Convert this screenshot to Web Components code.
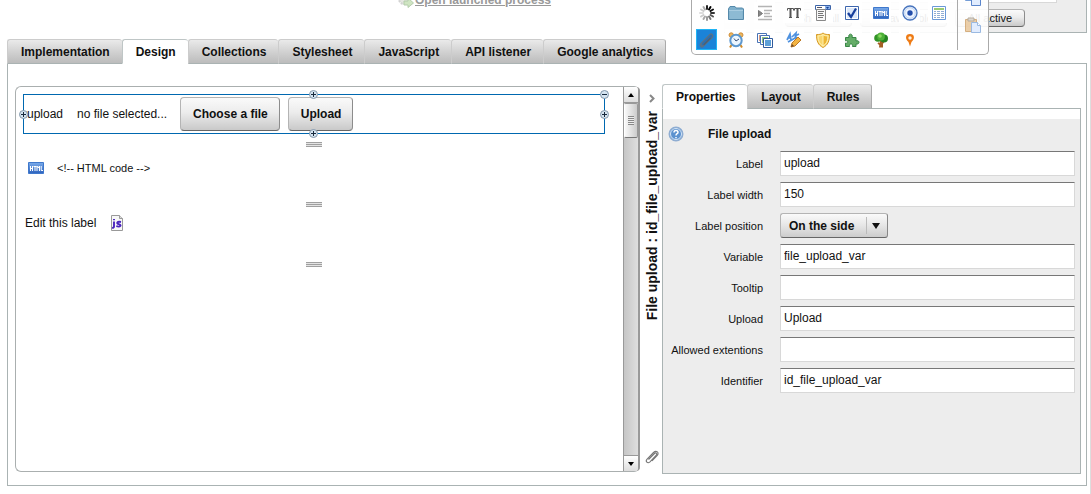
<!DOCTYPE html>
<html lang="en">
<head>
<meta charset="utf-8">
<title>Form designer</title>
<style>
  body { margin: 0; min-height: 100vh; background: #fff; color: #111; font: 12px/16px "Liberation Sans", Arial, sans-serif; }
</style>
</head>
<body>
<form-designer></form-designer>

<script>
const ICONS = {
  spinner: `<g stroke-width="2" stroke-linecap="round"><path d="M8 1v3" stroke="#222"/><path d="M11.5 2l-1.5 2.500" stroke="#000"/><path d="M14 4.500L11.500 6" stroke="#111"/><path d="M15 8h-3" stroke="#333"/><path d="M14 11.500L11.500 10" stroke="#555"/><path d="M11.500 14L10 11.500" stroke="#777"/><path d="M8 15v-3" stroke="#999"/><path d="M4.500 14L6 11.500" stroke="#aaa"/><path d="M2 11.500L4.500 10" stroke="#ccc"/><path d="M1 8h3" stroke="#ddd"/><path d="M2 4.500L4.500 6" stroke="#ccc"/><path d="M4.500 2L6 4.500" stroke="#aaa"/></g>`,
  folder: `<path d="M.5 4V14.500h15V4l-1-1H8L7 1.500H2L1 3z" fill="#7fb0cc" stroke="#5589aa"/><path d="M1 5.500h14" stroke="#a8cce0"/><path d="M1.500 6h13v8h-13z" fill="#8dbad3"/>`,
  indent: `<path d="M1 1.500h14M7 5.500h8M7 8.500h6M7 11.500h8M1 14.500h14" stroke="#b4b4b4" stroke-width="1.500"/><path d="M1.500 5.500l4 3-4 3z" fill="#888" stroke="#777"/>`,
  textsize: `<path d="M1.500 5.500V3.500h6v2M8.500 5.500V3.500h6v2" fill="none" stroke="#555"/><path d="M4.500 3.500v9M11.500 3.500v9" stroke="#555" stroke-width="2"/><path d="M3 12.500h3M10 12.500h3" stroke="#555"/>`,
  dropdown: `<path d="M.5.5h15v4H.5z" fill="#fff" stroke="#3c64a8"/><path d="M10 1h5v3h-5z" fill="#87aee8"/><path d="M11 2h3l-1.500 2z" fill="#143f91"/><path d="M2 2.500h5" stroke="#556"/><path d="M1.500 4.500h9v11h-9z" fill="#f8f8f8" stroke="#888"/><path d="M3 6.500h6M3 8.500h5M3 10.500h6M3 12.500h5" stroke="#777"/>`,
  checkbox: `<path d="M1.500 1.500h13v13h-13z" fill="#dbe7f8" stroke="#3d66ad"/><path d="M2.500 2.500h11v11h-11z" fill="none" stroke="#fff"/><path d="M4 8l3 4 5-8.500" fill="none" stroke="#173f9c" stroke-width="2.300"/>`,
  html: `<defs><linearGradient id="h" x2="0" y2="1"><stop stop-color="#7aabea"/><stop offset="1" stop-color="#2c62bd"/></linearGradient></defs><path d="M.5 2.500h15v11H.5z" fill="url(#h)" stroke="#3f78cc"/><path d="M2.500 6v5M4.500 6v5M2.500 8.500h2M5.500 6.500h3M7 6.500V11M9 11V6l1.200 2L11.500 6v5M13.200 6v4.500H15" fill="none" stroke="#fff"/>`,
  radio: `<circle cx="8" cy="8" r="7" fill="#edf4ff" stroke="#4874bd" stroke-width="1.300"/><circle cx="8" cy="8" r="5.300" fill="none" stroke="#c1d4ef"/><circle cx="8" cy="8" r="2.700" fill="#244eaa"/>`,
  table: `<path d="M1.500 1.500h13v13h-13z" fill="#fff" stroke="#6a99d8"/><path d="M3 4h10" stroke="#9bca73" stroke-width="2"/><path d="M3 6.500h2M3 8.500h2M3 10.500h2M3 12.500h2M6 6.500h3M6 8.500h3M6 10.500h3M6 12.500h3M10 6.500h3M10 8.500h3M10 10.500h3M10 12.500h3" stroke="#91aed5"/>`,
  paperclip: `<path d="M3 13l9-9" stroke="#5a7288" stroke-width="5" stroke-linecap="round"/><path d="M4 12l8-8" stroke="#2e6fae" stroke-width="2.500" stroke-linecap="round"/><path d="M5 12.500l6-6" fill="none" stroke="#50606f" stroke-width="1.200" stroke-linecap="round"/>`,
  clip: `<path d="M4.500 10.500l6-6c1.500-1.500 3 .2 1.800 1.500L6 12.800c-2.500 2.200-5-.4-2.900-2.700L9.500 3.500c3-2.800 6 .3 3.800 2.800L8 12" fill="none" stroke="#777" stroke-width="1.100"/>`,
  clock: `<circle cx="3.200" cy="3" r="2.200" fill="#edb65c" stroke="#cf8d38"/><circle cx="12.800" cy="3" r="2.200" fill="#edb65c" stroke="#cf8d38"/><path d="M3.500 13L2 15.500M12.500 13l1.500 2.500" stroke="#d18c2a" stroke-width="2"/><circle cx="8" cy="8.500" r="5.700" fill="#ecf6ff" stroke="#5d98cf" stroke-width="2"/><path d="M6 6.500L8 9l3-2" fill="none" stroke="#344d75"/>`,
  gallery: `<path d="M.5 1.500h9v9h-9z" fill="#fff" stroke="#4873b5"/><path d="M2 3h6v6H2z" fill="#d69c86"/><path d="M3.500 3.500h9v9h-9z" fill="#fff" stroke="#4873b5"/><path d="M5 5h6v6H5z" fill="#93c47f"/><path d="M6.500 6.500h9v9h-9z" fill="#fff" stroke="#315b9d"/><path d="M8 8h6v6H8z" fill="#5da0d8"/>`,
  sign: `<path d="M1 8l3-6 1 6M2 6h3M6 5l4-4-1 6M2 10l9-5M9 4l4-2" fill="none" stroke="#4e91df" stroke-width="1.700"/><path d="M5 15l1-4 6-6 3 3-6 6z" fill="#f3b443" stroke="#bb7825"/><path d="M5 15l1-3 2 2z" fill="#6b482a"/>`,
  shield: `<path d="M8 1c2 1.700 4 1.500 6.500 1.500C14.500 9 13 13 8 15.500 3 13 1.500 9 1.500 2.500 4 2.500 6 2.700 8 1z" fill="#f8d56c" stroke="#d79b27"/><path d="M8 3v11c3.500-2 4.500-5 4.800-10C11 4 9 4 8 3z" fill="#edb634"/><path d="M8 2.500v12" stroke="#fff0b0"/><path d="M3 4c2 0 3.500-.4 5-1.300C9.500 3.600 11 4 13 4c0 5-1.500 8-5 10-3.500-2-5-5-5-10z" fill="none" stroke="#fff0b0"/>`,
  puzzle: `<path d="M1.500 5.500H5C3.500 1 9.500 1 8 5.500h4V9c4-1.500 4 4 0 3v2.500H8.500c1-3.500-4-3.500-3 0h-4V11c3 1 3-3 0-2.200z" fill="#65ad68" stroke="#388646"/>`,
  tree: `<path d="M7 8h3v7.500H6z" fill="#a45f25"/><path d="M5 11l3 2 3-4" stroke="#a45f25" fill="none" stroke-width="2"/><circle cx="5" cy="6" r="3.800" fill="#329327"/><circle cx="11" cy="6.500" r="4" fill="#248221"/><circle cx="8" cy="4.500" r="3.900" fill="#4cb037"/><circle cx="7" cy="4" r="1.800" fill="#8bd862"/>`,
  pin: `<path d="M8 2c5 0 5 5 1.500 8L8 14.500 6.500 10C3 7 3 2 8 2z" fill="#ee7b15"/><circle cx="8" cy="6" r="1.700" fill="#fff3df"/>`,
  copy: `<path d="M.5.500h8l2 2v8H.5z" fill="#e2eeff" stroke="#5d8cd0"/><path d="M6.500 5.500h6l3 3v7h-9z" fill="#dceaff" stroke="#3f72c4"/>`,
  paste: `<path d="M.5 2.500h11v12H.5z" fill="#e8c69a" stroke="#cfa26b"/><path d="M3 1h6v3H3z" fill="#d8d3ca" stroke="#a99e8f"/><path d="M6.500 5.500h6l3 3v7h-9z" fill="#dceaff" stroke="#8aaedd"/><path d="M12.500 5.500v3h3" fill="#fff" stroke="#8aaedd"/>`,
  script: `<path d="M2.500.500h8l3 3v12h-11z" fill="#f7f7f7" stroke="#999"/><path d="M10.500.5v3h3" fill="#ddd" stroke="#999"/><path d="M5 4v1.200M5 6.500v5c0 1.300-1 1.500-2 1.200M12 7c-4-1-5 1.500-2.200 2.200 3.200.8 1.800 3.300-2.500 2" fill="none" stroke="#4a24bd" stroke-width="1.900"/>`,
  help: `<circle cx="8" cy="8" r="6.800" fill="#5c92cf" stroke="#8fadd2" stroke-width="1.400"/><circle cx="8" cy="8" r="5.500" fill="none" stroke="#d7e6f6"/><path d="M6 6.500c0-3 4-2.500 4-.2C10 8 8 7.500 8 9.500M8 11v1.300" fill="none" stroke="#fff" stroke-width="1.500"/>`,
  gear: `<circle cx="6" cy="7" r="5" fill="#e5e7e1" stroke="#d2d2d2" stroke-width="2" stroke-dasharray="2 1"/><path d="M6 9h4V6l5.500 5L10 15.500V13H6z" fill="#cfe5c2" stroke="#b4ccab"/>`,
  chevron: `<path d="M6 5l3.500 3.500L6 12" fill="none" stroke="#888" stroke-width="2"/>`
};

function define(name, render) {
  customElements.define(name, class extends HTMLElement {
    connectedCallback() {
      if (this.shadowRoot) return;
      this.attachShadow({ mode: "open" }).innerHTML = render(this);
    }
  });
}

define("ui-icon", el => `<style>
  :host { display: block; width: 16px; height: 16px; flex: none; }
  svg { display: block; overflow: visible; }
</style><svg width="16" height="16" viewBox="0 0 16 16" aria-hidden="true">${ICONS[el.getAttribute("name")]}</svg>`);

define("push-button", () => `<style>
  :host { display: block; flex: none; }
  button { display: block; box-sizing: border-box; height: 34px; padding: 0 11px 0 12px; font: bold 12px/16px "Liberation Sans", Arial, sans-serif; color: #111; background: linear-gradient(#fafafa, #ececec 45%, #c9c9c9); border: 1px solid #b4b4b4; border-right-color: #8c8c8c; border-bottom-color: #666; border-radius: 4px; }
  :host([small]) button { height: 18px; font-size: 11px; font-weight: normal; width: 100%; padding: 0; }
</style><button type="button"><slot></slot></button>`);

define("tab-strip", el => `<style>
  :host { display: flex; position: relative; height: 25px; margin-bottom: -1px; }
  button { box-sizing: border-box; height: 25px; padding: 0 12px 0 13px; font: bold 12px/16px "Liberation Sans", Arial, sans-serif; color: #111; background: linear-gradient(#eaeaea, #d2d2d2 50%, #bcbcbc); border: 1px solid #ccc; border-right: 0; border-bottom-color: #aab3b3; border-radius: 3px 3px 0 0; white-space: nowrap; }
  button[aria-selected=true] { background: #fff; border-color: #bfc6c6; border-bottom-color: #fff; }
  button:last-child { border-right: 1px solid #aaa; }
</style>${el.getAttribute("tabs").split("|").map(t => `<button type="button" role="tab" aria-selected="${t === el.getAttribute("active")}">${t}</button>`).join("")}`);

define("form-field", el => {
  const label = el.getAttribute("label"), value = el.getAttribute("value") || "";
  const control = el.hasAttribute("choice")
    ? `<div class="choice"><select id="f"><option>${value}</option></select></div>`
    : `<input id="f" type="text" value="${value}">`;
  return `<style>
  :host { display: grid; grid-template-columns: 100px minmax(0, 1fr); column-gap: 17px; height: 25px; align-items: center; }
  label { text-align: right; font-size: 11px; white-space: nowrap; }
  input { box-sizing: border-box; width: 100%; height: 25px; padding: 0 4px 1px 3px; background: #fff; border: 1px solid #d8d8d8; border-top-color: #777; font: 12px/16px "Liberation Sans", Arial, sans-serif; color: #111; outline: 0; }
  .choice { position: relative; justify-self: start; }
  select { display: block; appearance: none; box-sizing: border-box; width: 108px; height: 25px; padding: 0 24px 0 8px; font: bold 12px/16px "Liberation Sans", Arial, sans-serif; color: #111; background: linear-gradient(#fafafa, #e6e6e6 50%, #ccc); border: 1px solid #b4b4b4; border-right-color: #888; border-bottom-color: #666; border-radius: 3px; }
  .choice::before { content: ""; position: absolute; right: 21px; top: 4px; height: 17px; border-left: 1px solid #bbb; }
  .choice::after { content: ""; position: absolute; right: 8px; top: 10px; border: 4px solid transparent; border-top: 6px solid #111; border-bottom: 0; pointer-events: none; }
</style><label for="f">${label}</label>${control}`;
});

define("tool-palette", () => {
  const button = (n, on) => `<button type="button" aria-label="${n}"${on ? ' class="on"' : ""}><ui-icon name="${n}"></ui-icon></button>`;
  const tools = "spinner folder indent textsize dropdown checkbox html radio table paperclip clock gallery sign shield puzzle tree pin".split(" ");
  return `<style>
  :host { display: flex; box-sizing: border-box; width: 298px; height: 55px; border: 1px solid #aaa; border-top: 0; border-radius: 0 0 5px 5px; background: rgba(255,255,255,.92); }
  .tools { display: grid; grid-template-columns: repeat(9, 21px); grid-auto-rows: 21px; gap: 6px 8px; padding: 2px 0 0 4px; width: 261px; box-sizing: border-box; }
  button { display: flex; align-items: center; justify-content: center; width: 21px; height: 21px; padding: 0; border: 0; background: #fff; }
  button.on { background: #1b83d8; box-shadow: inset 0 0 0 1px #20b4f5; }
  .side { display: grid; grid-auto-rows: 21px; align-content: start; gap: 6px; height: 50px; box-sizing: border-box; padding-left: 4px; margin-left: 4px; border-left: 1px solid #aaa; overflow: hidden; }
  .side button { background: none; opacity: .85; margin-top: -13px; }
</style><div class="tools">${tools.map(t => button(t, t === "paperclip")).join("")}</div><div class="side">${button("copy")}${button("paste")}</div>`;
});

define("top-area", () => `<style>
  :host { display: flex; height: 39px; overflow: hidden; align-items: flex-start; }
  .launch { flex: 1; display: flex; gap: 1px; padding-left: 398px; margin-top: -8px; }
  a { color: #999; font-weight: bold; }
  .filters { box-sizing: border-box; width: 363px; height: 33px; margin-right: 3px; padding: 0 29px 0 32px; background: #ededed; border: 1px solid #aab3b3; border-width: 0 1px 1px 0; }
  input { display: block; box-sizing: border-box; width: 100%; height: 3px; padding: 0; background: #fff; border: 1px solid #d8d8d8; border-top: 0; }
  .row { display: grid; grid-template-columns: 67px 87px 70px; column-gap: 8px; padding: 6px 0 0 29px; }
</style>
<div class="launch"><ui-icon name="gear"></ui-icon><a href="#">Open launched process</a></div>
<div class="filters"><input type="text" aria-label="Filter"><div class="row"><push-button small>Show all</push-button><push-button small>All available</push-button><push-button small>All active</push-button></div></div>`);

define("drag-grip", () => `<style>
  :host { display: block; width: 16px; height: 5px; margin: 0 auto; background: repeating-linear-gradient(#a0a0a0 0 1px, #e4e4e4 1px 2px); }
</style>`);

define("resize-handle", el => `<style>
  :host { display: block; position: absolute; width: 9px; height: 9px; }
  svg { display: block; }
</style><svg width="9" height="9" viewBox="0 0 9 9"><circle cx="4.500" cy="4.500" r="4" fill="#d5e4f0" stroke="#8296aa"/><path d="M2 4.500h5${el.hasAttribute("minus") ? "" : "M4.500 2v5"}" stroke="#16283c"/></svg>`);

define("selected-widget", () => `<style>
  :host { display: flex; position: relative; box-sizing: border-box; height: 40px; align-items: center; padding-left: 3px; border: 1px solid #0068b0; }
  .status { margin-left: 14px; width: 95px; }
  push-button { margin-left: 8px; }
  resize-handle { top: -5px; left: calc(50% - 5px); }
  .b { top: auto; bottom: -5px; }
  .l { top: 15px; left: -5px; }
  .r { top: 15px; left: auto; right: -5px; }
  .m { left: auto; right: -5px; }
</style><span>upload</span><span class="status">no file selected...</span>
<push-button>Choose a file</push-button><push-button>Upload</push-button>
<resize-handle></resize-handle><resize-handle class="b"></resize-handle><resize-handle class="l"></resize-handle><resize-handle class="r"></resize-handle><resize-handle class="m" minus></resize-handle>`);

define("scroll-track", () => `<style>
  :host { display: flex; flex-direction: column; box-sizing: border-box; width: 17px; background: linear-gradient(90deg, #c6c6c6, #dedede); border-left: 1px solid #999; border-right: 2px solid #999; border-radius: 0 4px 4px 0; overflow: hidden; }
  button { width: 14px; height: 16px; padding: 0; border: 0; border-bottom: 1px solid #999; background: linear-gradient(#fff, #ddd); display: flex; align-items: center; justify-content: center; }
  button:last-child { border-bottom: 0; border-top: 1px solid #999; margin-top: auto; }
  .thumb { box-sizing: border-box; height: 35px; border: 1px solid #999; border-left-color: #fff; border-bottom-color: #777; border-radius: 2px; background: linear-gradient(90deg, #f8f8f8, #ccc); display: flex; align-items: center; justify-content: center; }
  .thumb::before { content: ""; width: 6px; height: 9px; background: repeating-linear-gradient(#888 0 1px, #eee 1px 2px); }
  svg { display: block; }
</style><button type="button" aria-label="Scroll up"><svg width="6" height="4"><path d="M0 4l3-4 3 4z"/></svg></button><div class="thumb"></div><button type="button" aria-label="Scroll down"><svg width="6" height="4"><path d="M0 0l3 4 3-4z"/></svg></button>`);

define("design-canvas", () => `<style>
  :host { display: flex; box-sizing: border-box; border: 1px solid #aaafaf; border-right: 0; border-radius: 6px; }
  .sheet { flex: 1; padding: 7px 18px 0 7px; }
  selected-widget { margin-bottom: 8px; }
  .item { display: flex; box-sizing: border-box; height: 55px; align-items: flex-start; }
  .code { padding: 13px 0 0 5px; gap: 13px; font-size: 11px; }
  .text { padding: 8px 0 0 2px; gap: 13px; }
</style><div class="sheet"><selected-widget></selected-widget><drag-grip></drag-grip>
<div class="item code"><ui-icon name="html"></ui-icon><span>&lt;!-- HTML code --&gt;</span></div><drag-grip></drag-grip>
<div class="item text"><span>Edit this label</span><ui-icon name="script"></ui-icon></div><drag-grip></drag-grip></div><scroll-track></scroll-track>`);

define("side-title", () => `<style>
  :host { display: flex; flex-direction: column; align-items: center; padding: 6px 0 9px 2px; }
  span { writing-mode: vertical-rl; transform: rotate(180deg); font-weight: bold; font-size: 14px; margin-top: 5px; white-space: nowrap; }
  .clip { margin-top: auto; }
</style><ui-icon name="chevron"></ui-icon><span>File upload : id_file_upload_var</span><ui-icon class="clip" name="clip"></ui-icon>`);

define("property-panel", () => `<style>
  :host { display: flex; flex-direction: column; }
  .body { flex: 1; border: 1px solid #aab3b3; padding-top: 10px; display: flex; }
  form { flex: 1; min-width: 0; background: #ededed; padding: 7px 5px 0 0; display: flex; flex-direction: column; gap: 6px; }
  .head { display: flex; align-items: center; height: 16px; gap: 24px; padding-left: 5px; margin-bottom: 3px; }
  h2 { margin: 0; font-size: 12px; line-height: 16px; }
</style><tab-strip tabs="Properties|Layout|Rules" active="Properties"></tab-strip>
<div class="body"><form><div class="head"><ui-icon name="help"></ui-icon><h2>File upload</h2></div>
<form-field label="Label" value="upload"></form-field>
<form-field label="Label width" value="150"></form-field>
<form-field label="Label position" value="On the side" choice></form-field>
<form-field label="Variable" value="file_upload_var"></form-field>
<form-field label="Tooltip"></form-field>
<form-field label="Upload" value="Upload"></form-field>
<form-field label="Allowed extentions"></form-field>
<form-field label="Identifier" value="id_file_upload_var"></form-field>
</form></div>`);

define("form-designer", () => `<style>
  :host { display: flex; flex-direction: column; position: relative; box-sizing: border-box; min-height: 100vh; border-right: 1px solid #ddd; }
  tool-palette { position: absolute; top: 0; right: 101px; z-index: 1; }
  main { flex: 1; display: flex; flex-direction: column; padding: 0 3px 8px 7px; }
  .work { flex: 1; display: grid; grid-template-columns: minmax(0, 1fr) 22px 419px; border: 1px solid #aab3b3; padding: 20px 5px 11px 7px; }
  design-canvas { margin: 2px 0; }
</style><top-area></top-area><tool-palette></tool-palette>
<main><tab-strip tabs="Implementation|Design|Collections|Stylesheet|JavaScript|API listener|Google analytics" active="Design"></tab-strip>
<div class="work"><design-canvas></design-canvas><side-title></side-title><property-panel></property-panel></div></main>`);
</script>
</body>
</html>
